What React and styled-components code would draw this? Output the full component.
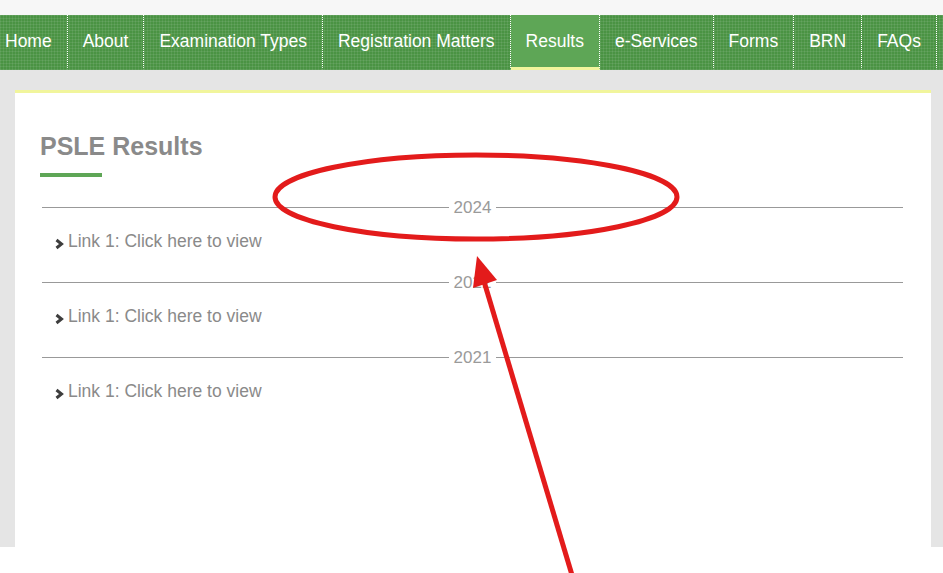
import React from "react";
import styled, { createGlobalStyle } from "styled-components";

const GlobalStyle = createGlobalStyle`
	html, body {
		margin: 0;
		padding: 0;
		background: #fff;
		font-family: "Liberation Sans", Arial, sans-serif;
	}
`;

const Page = styled.div`
	position: relative;
	width: 943px;
	height: 573px;
	overflow: hidden;
	background: #fff;
`;

const TopStrip = styled.div`
	height: 15px;
	background: #f7f7f7;
`;

const Nav = styled.nav`
	display: flex;
	height: 55px;
	background-color: #4a9343;
	background-image: linear-gradient(rgba(255, 255, 255, 0.08) 1px, transparent 1px),
		linear-gradient(90deg, rgba(255, 255, 255, 0.08) 1px, transparent 1px);
	background-size: 3px 3px;
	overflow: hidden;
`;

const NavList = styled.ul`
	display: flex;
	margin: 0 0 0 -10px;
	padding: 0;
	list-style: none;
`;

const NavItem = styled.li`
	display: flex;
	align-items: center;
	padding: 0 15px;
	border-right: 1px dotted #fff;
	border-bottom: 3px solid ${(p) => (p.$active ? "#f1f59c" : "transparent")};
	background: ${(p) => (p.$active ? "#5ea656" : "transparent")};
	color: #fff;
	font-size: 17.5px;
	white-space: nowrap;
	cursor: pointer;
`;

const Main = styled.main`
	height: 477px;
	padding: 20px 12px 0 15px;
	box-sizing: border-box;
	background: #e5e5e5;
`;

const Card = styled.section`
	height: 100%;
	box-sizing: border-box;
	background: #fff;
	border-top: 3px solid #f1f59c;
	padding: 38px 28px 0 25px;
`;

const Title = styled.h1`
	margin: 0;
	font-size: 25px;
	line-height: 30px;
	font-weight: 700;
	color: #8a8a8a;
`;

const TitleBar = styled.div`
	width: 62px;
	height: 4px;
	margin-top: 12px;
	background: #5ea656;
`;

const Section = styled.div`
	margin-top: ${(p) => (p.$first ? "21px" : "22px")};
	margin-left: 2px;
`;

const YearRow = styled.div`
	display: flex;
	align-items: center;
	gap: 5px;
	height: 20px;
	font-size: 17px;
	line-height: 20px;
	color: #9a9a9a;

	&::before,
	&::after {
		content: "";
		flex: 1;
		height: 1px;
		background: #999;
		transform: translateY(-1px);
	}
`;

const LinkRow = styled.a`
	display: flex;
	align-items: center;
	gap: 4px;
	margin-top: 13px;
	padding-left: 12px;
	font-size: 17.5px;
	line-height: 20px;
	color: #8a8a8a;
	text-decoration: none;
	cursor: pointer;
`;

const Chevron = styled.svg`
	width: 10px;
	height: 12px;
	margin-top: 5px;
	flex-shrink: 0;
`;

const Annotation = styled.svg`
	position: absolute;
	left: 0;
	top: 0;
	pointer-events: none;
`;

const navItems = [
	"Home",
	"About",
	"Examination Types",
	"Registration Matters",
	"Results",
	"e-Services",
	"Forms",
	"BRN",
	"FAQs",
	"",
];

const years = ["2024", "2022", "2021"];

const App = () => {
	return (
		<Page>
			<GlobalStyle />
			<TopStrip />
			<Nav>
				<NavList>
					{navItems.map((item, i) => (
						<NavItem key={i} $active={item === "Results"}>
							{item}
						</NavItem>
					))}
				</NavList>
			</Nav>
			<Main>
				<Card>
					<Title>PSLE Results</Title>
					<TitleBar />
					{years.map((year, i) => (
						<Section key={year} $first={i === 0}>
							<YearRow>{year}</YearRow>
							<LinkRow>
								<Chevron viewBox="0 0 10 12">
									<path d="M2.5 2 L7.5 6 L2.5 10" fill="none" stroke="#3d3d3d" strokeWidth="3" />
								</Chevron>
								Link 1: Click here to view
							</LinkRow>
						</Section>
					))}
				</Card>
			</Main>
			<Annotation width="943" height="573" viewBox="0 0 943 573">
				<ellipse cx="476" cy="197" rx="201" ry="42" fill="none" stroke="#e31b1b" strokeWidth="5" />
				<line x1="572" y1="575" x2="483" y2="278" stroke="#e31b1b" strokeWidth="5" />
				<polygon points="477,256 497,280 473,288" fill="#e31b1b" />
			</Annotation>
		</Page>
	);
};

export default App;
